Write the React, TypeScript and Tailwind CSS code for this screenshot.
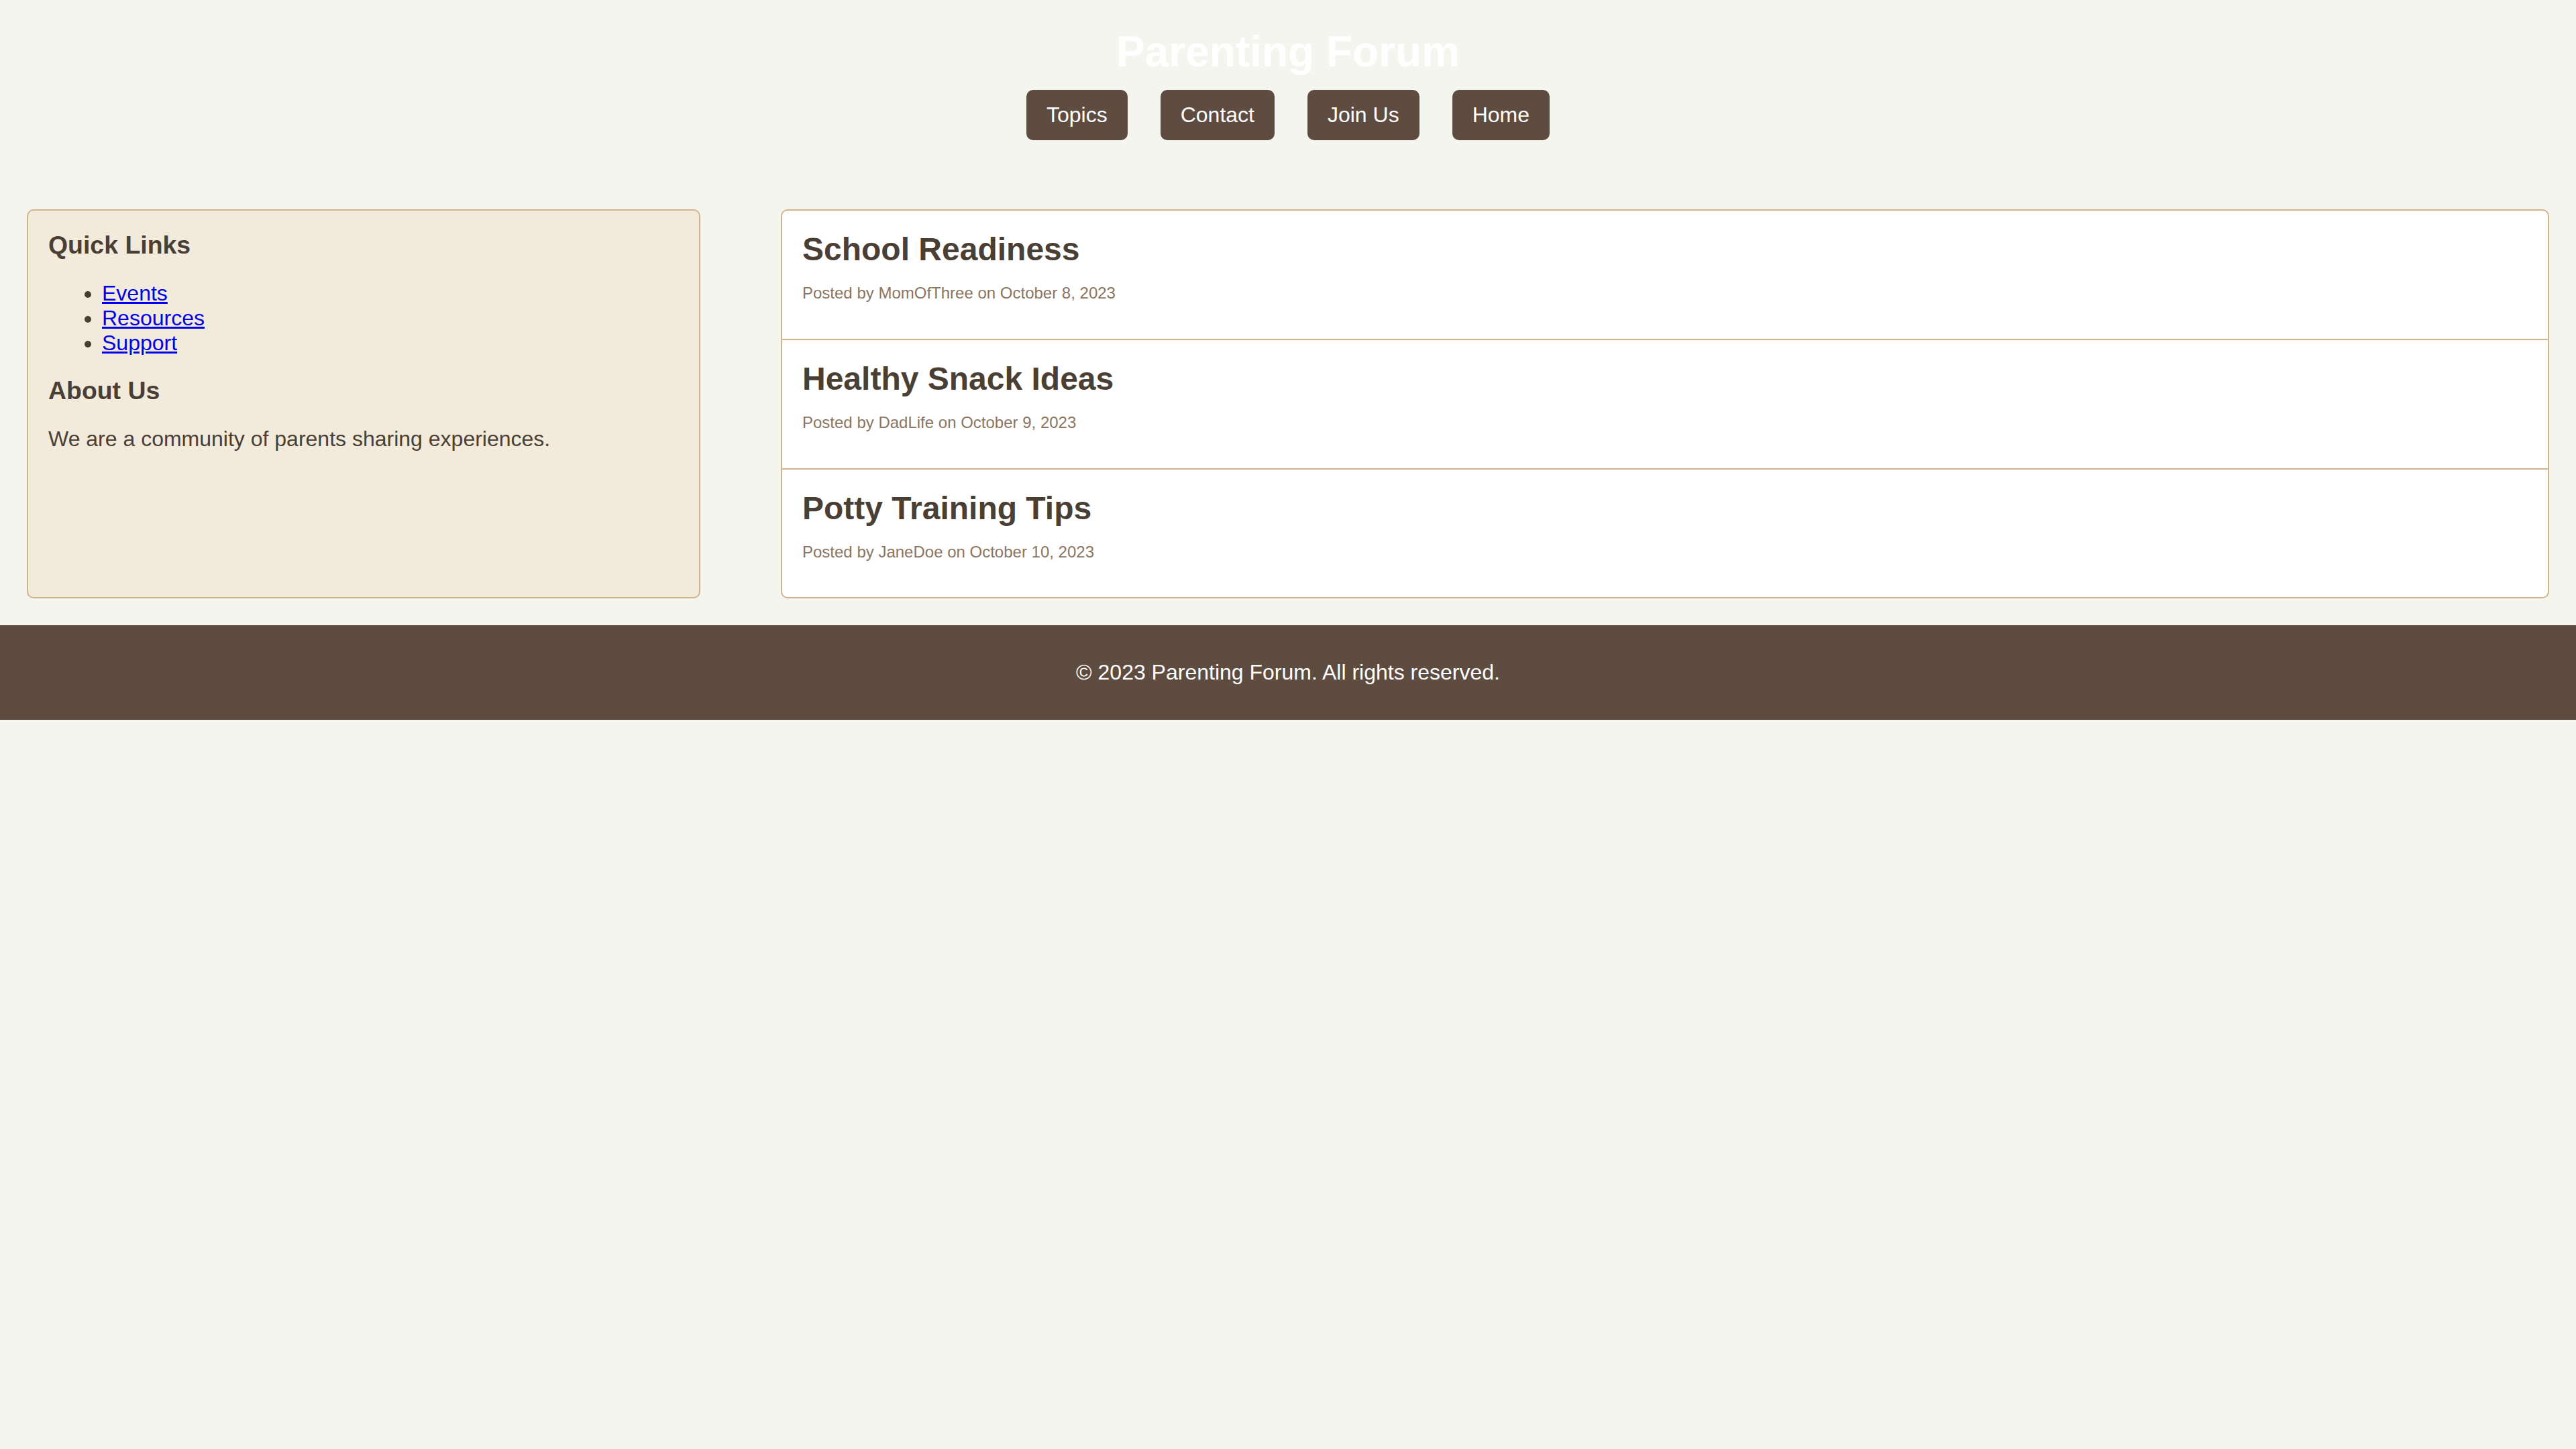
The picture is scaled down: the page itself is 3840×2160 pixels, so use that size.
import React from "react";

const posts = [
  { title: "School Readiness", author: "MomOfThree", date: "October 8, 2023" },
  { title: "Healthy Snack Ideas", author: "DadLife", date: "October 9, 2023" },
  { title: "Potty Training Tips", author: "JaneDoe", date: "October 10, 2023" },
];

const navItems = ["Topics", "Contact", "Join Us", "Home"];

export default function App() {
  return (
    <div
      className="min-h-screen w-full bg-[#f5f5f0] text-[#4a3f35]"
      style={{ fontFamily: '"Liberation Sans", Arial, sans-serif' }}
    >
      <header className="pt-[40px] text-center">
        <h1 className="text-[64px] leading-[74px] font-bold text-white">Parenting Forum</h1>
        <nav className="mt-[20px] flex justify-center gap-[49px]">
          {navItems.map((item) => (
            <a
              key={item}
              href="#"
              className="block rounded-[10px] bg-[#5e4c41] px-[30px] py-[19px] text-[32px] leading-[37px] text-white no-underline"
            >
              {item}
            </a>
          ))}
        </nav>
      </header>

      <div className="mt-[103px] flex items-stretch gap-[120px] px-[40px]">
        <aside className="w-[1004px] shrink-0 rounded-[10px] border-2 border-[#d2b48c] bg-[#f2eadb] p-[30px]">
          <h3 className="text-[37.44px] leading-[43px] font-bold text-[#4a3f35]">Quick Links</h3>
          <ul className="mt-[32px] list-disc pl-[80px] text-[32px] leading-[36.8px] text-[#4a3f35]">
            <li>
              <a href="#" className="text-[#0000ee] underline">Events</a>
            </li>
            <li>
              <a href="#" className="text-[#0000ee] underline">Resources</a>
            </li>
            <li>
              <a href="#" className="text-[#0000ee] underline">Support</a>
            </li>
          </ul>
          <h3 className="mt-[32px] text-[37.44px] leading-[43px] font-bold text-[#4a3f35]">About Us</h3>
          <p className="mt-[32px] text-[32px] leading-[36.8px] text-[#4a3f35]">
            We are a community of parents sharing experiences.
          </p>
        </aside>

        <main className="flex-1 overflow-hidden rounded-[10px] border-2 border-[#d2b48c] bg-white">
          {posts.map((p, i) => (
            <div
              key={p.title}
              className={
                i < posts.length - 1
                  ? "border-b-2 border-[#d2b48c] px-[30px] pt-[30px] pb-[54px]"
                  : "px-[30px] pt-[30px] pb-[54px]"
              }
            >
              <h2 className="text-[48px] leading-[55.2px] font-bold text-[#4a3f35]">{p.title}</h2>
              <p className="mt-[24px] text-[24px] leading-[27.6px] text-[#8b7560]">
                Posted by {p.author} on {p.date}
              </p>
            </div>
          ))}
        </main>
      </div>

      <footer className="mt-[40px] bg-[#5e4c41] py-[52px] text-center text-[32px] leading-[37px] text-white">
        <p>© 2023 Parenting Forum. All rights reserved.</p>
      </footer>
    </div>
  );
}
